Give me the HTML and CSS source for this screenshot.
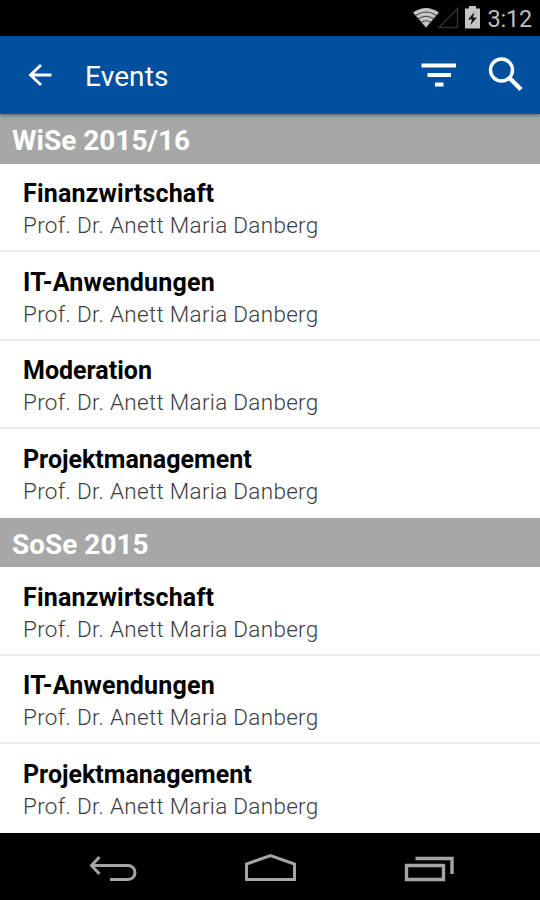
FILE: index.html
```
<!DOCTYPE html>
<html lang="de">
<head>
    <meta charset="utf-8">
    <title>Events</title>
    <link rel="stylesheet" href="styles.css">
</head>
<body>
    <div class="status-bar">
        <svg class="status-icons" width="70" height="36" viewBox="412 0 70 36">
            <!-- wifi -->
            <path d="M413 12.5Q426 3.5 439 12.5L426 27.5Z" fill="#c4c4c4"/>
            <path d="M415.5 15.5Q426 8.5 436.5 15.5M418 19Q426 13.5 434 19M421 22.5Q426 19 431 22.5" fill="none" stroke="#444" stroke-width="1.1"/>
            <!-- signal -->
            <path d="M439 27.5L457.5 8.5V27.5Z" fill="none" stroke="#303030" stroke-width="1.5"/>
            <!-- battery -->
            <path d="M465 8.5H469V6H476V8.5H480V28.5H465Z" fill="#c4c4c4"/>
            <path d="M474.5 12L468 19.5H472L470.5 25L477 17.5H473Z" fill="#111"/>
        </svg>
        <span class="clock">3:12</span>
    </div>

    <header class="toolbar">
        <svg class="back" width="24" height="24" viewBox="28 63 24 24">
            <path d="M51.5 75H30.5M41 65L30.5 75L41 85" fill="none" stroke="#fff" stroke-width="2.8"/>
        </svg>
        <h1>Events</h1>
        <svg class="filter" width="36" height="26" viewBox="421 62 36 26">
            <path d="M421.5 65.5H456M427.5 75H451M435 84.5H443.5" fill="none" stroke="#fff" stroke-width="4"/>
        </svg>
        <svg class="search" width="36" height="36" viewBox="488 57 36 36">
            <circle cx="501.5" cy="70" r="11" fill="none" stroke="#fff" stroke-width="3.4"/>
            <path d="M509.5 78L521 89.5" stroke="#fff" stroke-width="4.4"/>
        </svg>
    </header>

    <main class="events">
        <h2>WiSe 2015/16</h2>
        <ul>
            <li><h3 class="wide">Finanzwirtschaft</h3><p>Prof. Dr. Anett Maria Danberg</p></li>
            <li><h3 class="wide">IT-Anwendungen</h3><p>Prof. Dr. Anett Maria Danberg</p></li>
            <li><h3>Moderation</h3><p>Prof. Dr. Anett Maria Danberg</p></li>
            <li><h3>Projektmanagement</h3><p>Prof. Dr. Anett Maria Danberg</p></li>
        </ul>
        <h2>SoSe 2015</h2>
        <ul>
            <li><h3 class="wide">Finanzwirtschaft</h3><p>Prof. Dr. Anett Maria Danberg</p></li>
            <li><h3 class="wide">IT-Anwendungen</h3><p>Prof. Dr. Anett Maria Danberg</p></li>
            <li><h3>Projektmanagement</h3><p>Prof. Dr. Anett Maria Danberg</p></li>
        </ul>
    </main>

    <nav class="nav-bar">
        <svg width="180" height="67" viewBox="0 833 180 67">
            <path d="M91.5 865.5H128A7 7 0 0 1 128 879.5H110M99.5 857L91.5 865.5L99.5 874" fill="none" stroke="#a5a5a5" stroke-width="3"/>
        </svg>
        <svg width="180" height="67" viewBox="180 833 180 67">
            <path d="M246.5 879.5V864L270.5 855.5L294.5 864V879.5Z" fill="none" stroke="#a5a5a5" stroke-width="3"/>
        </svg>
        <svg width="180" height="67" viewBox="360 833 180 67">
            <path d="M406.5 865.5H443.5V879.5H406.5ZM415.5 858.5H452V874" fill="none" stroke="#a5a5a5" stroke-width="3.4"/>
        </svg>
    </nav>
</body>
</html>
```
FILE: styles.css
```
* { box-sizing: border-box; }
body {
    margin: 0;
    width: 540px;
    height: 900px;
    overflow: hidden;
    display: flex;
    flex-direction: column;
    background: #fff;
    font-family: Roboto, "Noto Sans", sans-serif;
}
h1, h2, h3, p, ul { margin: 0; padding: 0; }
svg { display: block; flex: none; }
.status-bar {
    height: 36px;
    flex: none;
    display: flex;
    align-items: center;
    justify-content: space-between;
    padding: 0 8px 0 412px;
    background: #000;
}
.clock {
    color: #bebebe;
    font-size: 23.5px;
    line-height: 36px;
    letter-spacing: -0.2px;
    padding-top: 1px;
}
.toolbar {
    height: 78px;
    flex: none;
    display: flex;
    align-items: center;
    padding: 0 16px 0 28px;
    background: #00509f;
    box-shadow: 0 1px 4px rgba(0,0,0,0.5);
    z-index: 1;
}
.toolbar h1 {
    flex: 1;
    margin-left: 33px;
    padding-top: 3px;
    color: #fff;
    font-size: 28px;
    font-weight: 400;
    letter-spacing: 0.1px;
}
.search { margin-left: 31px; }
.events { height: 719px; flex: none; }
.events h2 {
    height: 49.5px;
    padding-left: 12px;
    background: #a7a7a7;
    color: #fff;
    font-size: 28px;
    font-weight: 700;
    line-height: 54px;
}
.events ul { list-style: none; }
.events li {
    height: 88.55px;
    padding: 14.5px 24px 0 23px;
    border-bottom: 2px solid #ececec;
}
.events li:last-child { border-bottom: none; }
.events h3 {
    color: #000;
    font-size: 25px;
    font-weight: 700;
    line-height: 32px;
}
.events h3.wide { letter-spacing: 0.18px; }
.events p {
    color: #3c3c3c;
    font-size: 22.5px;
    font-weight: 300;
    line-height: 30px;
    letter-spacing: 0.3px;
}
.nav-bar {
    flex: 1;
    display: flex;
    background: #000;
}
```
